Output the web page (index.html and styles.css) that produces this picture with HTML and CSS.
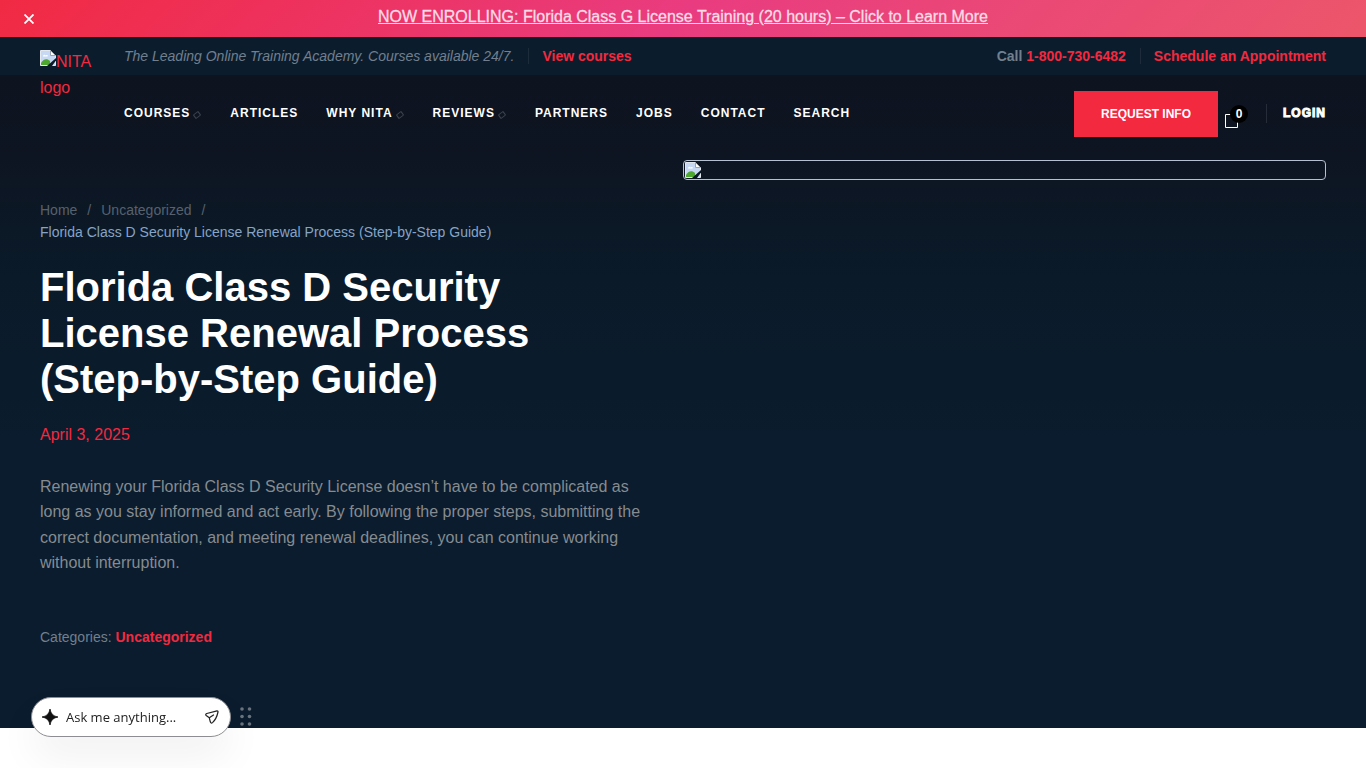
FILE: index.html
```html
<!DOCTYPE html>
<html lang="en">
<head>
  <meta charset="UTF-8">
  <meta name="viewport" content="width=device-width, initial-scale=1.0">
  <title>Florida Class D Security License Renewal Process (Step-by-Step Guide)</title>
  <link rel="stylesheet" href="styles.css">
</head>
<body>
  <div class="banner">
    <button type="button" class="banner-close" aria-label="Close">
      <svg width="10" height="10" viewBox="0 0 10 10"><path d="M0.5 0.5l9 9M9.5 0.5l-9 9" stroke="#fff" stroke-width="1.8"/></svg>
    </button>
    <a href="#" class="banner-link">NOW ENROLLING: Florida Class G License Training (20 hours) – Click to Learn More</a>
  </div>

  <div class="page">
    <header class="header">
      <a href="#" class="logo">
        <svg class="broken" width="16" height="16" viewBox="0 0 16 16">
          <path d="M0.5 0.5h10l5 5v10h-15z" fill="#c6d8f3" stroke="#e4e9f0"/>
          <path d="M3 6.500c0-2 2-2.500 2.500-1 1.500-1 3 0 2 1z" fill="#fff"/>
          <path d="M1 15v-2c2-4 6-5 9-2v4z" fill="#4ea72e"/>
          <path d="M10.500 0.500v5h5z" fill="#fff" stroke="#9aa3ad"/>
          <path d="M7 16l9-8v2.500l-4 5.500z" fill="#0c1824"/>
        </svg>NITA logo
      </a>
      <div class="header-main">
        <div class="topbar">
          <span class="tagline">The Leading Online Training Academy. Courses available 24/7.</span>
          <a href="#" class="divided">View courses</a>
          <span class="call">Call <a href="#">1-800-730-6482</a></span>
          <a href="#" class="divided">Schedule an Appointment</a>
        </div>
        <div class="navbar">
          <nav class="nav">
            <a href="#">COURSES<i class="mark"></i></a>
            <a href="#">ARTICLES</a>
            <a href="#">WHY NITA<i class="mark"></i></a>
            <a href="#">REVIEWS<i class="mark"></i></a>
            <a href="#">PARTNERS</a>
            <a href="#">JOBS</a>
            <a href="#">CONTACT</a>
            <a href="#">SEARCH</a>
          </nav>
          <a href="#" class="request">REQUEST INFO</a>
          <a href="#" class="cart" aria-label="Cart">
            <svg width="14" height="16" viewBox="0 0 14 16"><path d="M0.500 1.500h12v13h-12z" fill="none" stroke="#fff"/></svg>
            <span class="count">0</span>
          </a>
          <a href="#" class="login">LOGIN</a>
        </div>
      </div>
    </header>

    <main class="hero">
      <div class="intro">
        <div class="breadcrumb">
          <div><a href="#">Home</a><span class="slash">/</span><a href="#">Uncategorized</a><span class="slash">/</span></div>
          <div class="current">Florida Class D Security License Renewal Process (Step-by-Step Guide)</div>
        </div>
        <h1 class="title">Florida Class D Security License Renewal Process (Step-by-Step Guide)</h1>
        <div class="date">April 3, 2025</div>
        <p class="excerpt">Renewing your Florida Class D Security License doesn’t have to be complicated as long as you stay informed and act early. By following the proper steps, submitting the correct documentation, and meeting renewal deadlines, you can continue working without interruption.</p>
        <div class="categories">Categories: <a href="#">Uncategorized</a></div>
      </div>
      <div class="photo">
        <svg class="broken" width="16" height="16" viewBox="0 0 16 16">
          <path d="M0.5 0.5h10l5 5v10h-15z" fill="#c6d8f3" stroke="#e4e9f0"/>
          <path d="M3 6.500c0-2 2-2.500 2.500-1 1.500-1 3 0 2 1z" fill="#fff"/>
          <path d="M1 15v-2c2-4 6-5 9-2v4z" fill="#4ea72e"/>
          <path d="M10.500 0.500v5h5z" fill="#fff" stroke="#9aa3ad"/>
          <path d="M7 16l9-8v2.500l-4 5.500z" fill="#0c1824"/>
        </svg>
      </div>
    </main>
  </div>

  <div class="chat">
    <form class="ask">
      <svg width="16" height="16" viewBox="0 0 16 16"><path d="M8 0Q9 7 16 8Q9 9 8 16Q7 9 0 8Q7 7 8 0z" fill="#111" stroke="#111" stroke-width="0.800"/></svg>
      <input type="text" class="ask-input" placeholder="Ask me anything..." aria-label="Ask me anything">
      <button type="button" class="send" aria-label="Send">
        <svg width="14" height="14" viewBox="0 0 14 14"><path d="M12 0.800L1.800 3.500Q0 4.200 1.200 5.500L4.300 7.800L5.300 11.800Q6 13.800 7.500 12.600Q11.500 9 13 2Q13.200 0.700 12 0.800zM4.300 7.800L8.500 5" fill="none" stroke="#222" stroke-width="1.200" stroke-linejoin="round" stroke-linecap="round"/></svg>
      </button>
    </form>
    <svg class="grip" width="12" height="20" viewBox="0 0 12 20" fill="#69727d">
      <circle cx="2" cy="2" r="1.800"/><circle cx="9.500" cy="2" r="1.800"/>
      <circle cx="2" cy="9.500" r="1.800"/><circle cx="9.500" cy="9.500" r="1.800"/>
      <circle cx="2" cy="17" r="1.800"/><circle cx="9.500" cy="17" r="1.800"/>
    </svg>
  </div>
</body>
</html>
```
FILE: styles.css
```css
* {
  box-sizing: border-box;
}

body {
  margin: 0;
  background-color: #fff;
  font-family: "Liberation Sans", Arial, sans-serif;
  font-size: 16px;
  line-height: 1.6;
}

a {
  color: #f2293f;
  text-decoration: none;
}

button {
  background: none;
  border: 0;
  padding: 0;
  cursor: pointer;
}

svg {
  display: block;
}

.banner {
  display: flex;
  align-items: center;
  height: 37px;
  padding: 0 24px;
  background: linear-gradient(135deg, #f12a43, #e93c80 50%, #ec566a);
}

.banner-close {
  width: 10px;
}

.banner-link {
  flex: 1;
  padding: 0 10px 4px 0;
  color: #fbdce6;
  -webkit-text-stroke: 0.3px #fbdce6;
  text-align: center;
  text-decoration: underline;
}

.page {
  padding-bottom: 80px;
  background: linear-gradient(#0b1d2d 38px, #0d131f 38px, #0e1522 120px, #0a1a29 240px, #0a1c2d 400px);
}

.header {
  display: flex;
  padding: 0 40px;
}

.logo {
  width: 84px;
  padding: 12px 24px 0 0;
}

.logo .broken {
  display: inline-block;
  vertical-align: 1px;
}

.header-main {
  flex: 1;
}

.topbar {
  display: flex;
  align-items: center;
  height: 38px;
  font-size: 14px;
  font-weight: bold;
}

.tagline {
  color: #727f8d;
  font-style: italic;
  font-weight: normal;
}

.call {
  margin-left: auto;
  color: #727f8d;
}

.divided {
  margin-left: 14px;
  padding-left: 13px;
  border-left: 1px solid #1c2c3b;
  line-height: 16px;
}

.navbar {
  display: flex;
  align-items: center;
  height: 77px;
}

.nav {
  display: flex;
  gap: 28px;
  margin-right: auto;
}

.nav a {
  display: flex;
  align-items: center;
  color: #fff;
  font-size: 12px;
  font-weight: bold;
  letter-spacing: 1px;
}

.mark {
  width: 6px;
  height: 6px;
  margin: 2px 2px 0 4px;
  border: 1px solid #3b424d;
  border-radius: 1px;
  transform: skewX(-15deg) rotate(45deg);
}

.request {
  padding: 0 27px;
  background-color: #f2293f;
  color: #fff;
  font-size: 12px;
  font-weight: bold;
  line-height: 46px;
}

.cart {
  position: relative;
  width: 22px;
  margin: 14px 0 0 7px;
}

.count {
  position: absolute;
  top: -8px;
  left: 5px;
  width: 18px;
  height: 18px;
  border-radius: 50%;
  background-color: #000;
  color: #fff;
  font-size: 12px;
  font-weight: bold;
  line-height: 18px;
  text-align: center;
}

.login {
  margin-left: 19px;
  padding-left: 16px;
  border-left: 1px solid #262d39;
  color: #fff;
  -webkit-text-stroke: 1px #fff;
  font-size: 12px;
  font-weight: bold;
  letter-spacing: 1px;
}

.hero {
  display: grid;
  grid-template-columns: 1fr 1fr;
  align-items: start;
  padding: 8px 40px 0;
}

.intro {
  padding: 39px 40px 0 0;
}

.breadcrumb {
  color: #56616e;
  font-size: 14px;
  line-height: 22px;
}

.breadcrumb a {
  color: #56616e;
}

.slash {
  margin: 0 10px;
}

.current {
  color: #86a4c6;
}

.title {
  max-width: 520px;
  margin: 21px 0 20px;
  color: #fff;
  font-size: 40px;
  line-height: 46px;
}

.date {
  color: #f2293f;
}

.excerpt {
  margin: 26px 0 50px;
  color: #868b90;
}

.categories {
  color: #727f8d;
  font-size: 14px;
}

.categories a {
  font-weight: bold;
}

.photo {
  padding: 1px;
  border: 1px solid #b4bfd0;
  border-radius: 4px;
}

.chat {
  position: fixed;
  bottom: 31px;
  left: 31px;
  display: flex;
  align-items: center;
  gap: 9px;
}

.ask {
  display: flex;
  align-items: center;
  width: 200px;
  height: 40px;
  padding: 0 11px 0 10px;
  border: 1px solid #8e8e92;
  border-radius: 20px;
  background-color: #fff;
  box-shadow: 0 20px 40px rgba(0, 0, 0, 0.06);
}

.ask-input {
  flex: 1;
  min-width: 0;
  padding: 0 8px;
  border: 0;
  outline: 0;
  background: none;
  font-family: "Open Sans", sans-serif;
  font-size: 13px;
}

.ask-input::placeholder {
  color: #222;
}
```
